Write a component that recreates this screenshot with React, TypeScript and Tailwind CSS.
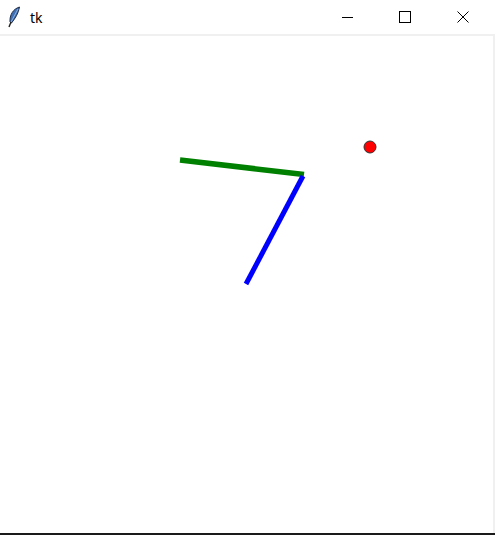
function Feather() {
  return (
    <svg width="14" height="22" viewBox="0 0 14 22">
      <path d="M12.5 1 C6 3 2.5 9 3 16 L4.5 17 C8.5 12 11.5 7 12.5 1 Z" fill="#3f6fb4" stroke="#1e2e4a" strokeWidth="1" />
      <path d="M11 3 L4 16" stroke="#9cc0e8" strokeWidth="0.8" />
      <path d="M4 16 L2 21" stroke="#222" strokeWidth="1.4" />
    </svg>
  );
}

function TitleButton({ children }: { children: React.ReactNode }) {
  return (
    <div className="flex h-full w-[58px] items-center justify-center">
      {children}
    </div>
  );
}

export default function App() {
  return (
    <div className="flex h-[535px] w-[495px] flex-col bg-white">
      <div className="flex h-[34px] items-center bg-white">
        <div className="ml-[7px] flex items-center">
          <Feather />
        </div>
        <span className="ml-[9px] text-[14px] text-black [font-family:'Noto_Sans',sans-serif]">
          tk
        </span>
        <div className="mr-[3px] ml-auto flex h-full">
          <TitleButton>
            <div className="h-px w-[11px] bg-black" />
          </TitleButton>
          <TitleButton>
            <div className="h-[12px] w-[12px] border border-black" />
          </TitleButton>
          <TitleButton>
            <svg width="12" height="12" viewBox="0 0 12 12">
              <path d="M0.5 0.5 L11.5 11.5 M11.5 0.5 L0.5 11.5" stroke="black" strokeWidth="1" />
            </svg>
          </TitleButton>
        </div>
      </div>
      <div className="h-[2px] bg-[#f0f0f0]" />
      <div className="flex flex-1">
        <div className="flex-1 bg-white">
          <svg className="block h-full w-full" viewBox="0 36 493 497" preserveAspectRatio="none">
            <line x1="180" y1="160" x2="304" y2="174.5" stroke="#008000" strokeWidth="5.5" />
            <line x1="303" y1="176" x2="246" y2="284" stroke="#0000ff" strokeWidth="5" />
            <circle cx="370" cy="147" r="6" fill="#ff0000" stroke="#333" strokeWidth="1" />
          </svg>
        </div>
        <div className="w-[2px] bg-[#f0f0f0]" />
      </div>
      <div className="h-[2px] bg-[#1a1a1a]" />
    </div>
  );
}
